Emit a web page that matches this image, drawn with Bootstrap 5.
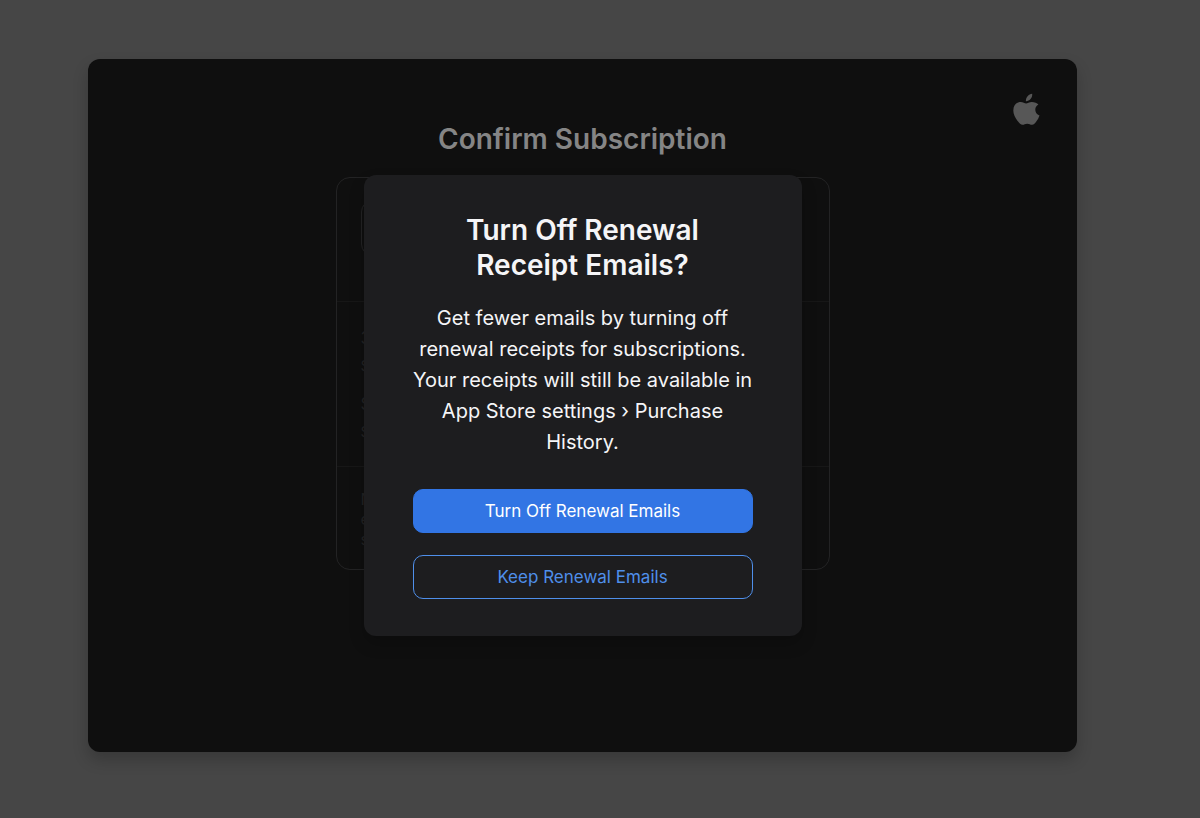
<!DOCTYPE html>
<html lang="en" data-bs-theme="dark">
<head>
<meta charset="utf-8">
<meta name="viewport" content="width=device-width, initial-scale=1">
<title>Confirm Subscription</title>
<link href="https://cdn.jsdelivr.net/npm/bootstrap@5.3.0/dist/css/bootstrap.min.css" rel="stylesheet">
<style>
body { background: #464646; font-family: Inter, "Liberation Sans", sans-serif; }
.stage { padding: 59px 123px 66px 88px; }
.window { background: #0f0f0f; border-radius: 12px; box-shadow: 0 8px 16px rgba(0,0,0,.2); }
.page-title { font-size: 28px; line-height: 36px; font-weight: 600; color: #858585; padding-top: 62px; margin-bottom: 20px; }
.logo { top: 34px; right: 37px; color: #575757; }
.summary { width: 494px; border: 1px solid #232324; border-radius: 14px; color: #222223; }
.summary-part { padding: 22px 24px 20px; }
.summary-part + .summary-part { border-top: 1px solid #171717; }
.product { height: 123px; }
.app-tile { width: 56px; height: 56px; border: 1px solid #232324; border-radius: 12px; }
.line-lg { font-size: 17px; line-height: 28px; }
.line-sm { font-size: 15px; line-height: 28px; }
.plan-gap { margin-bottom: 10px; }
.note { font-size: 16px; line-height: 20px; }
.dialog-box { width: 438px; background: #1d1d1f; border-radius: 12px; padding: 38px 49px 37px; box-shadow: 0 8px 16px rgba(0,0,0,.2); }
.dialog-title { font-size: 28px; line-height: 35px; font-weight: 600; color: #f5f5f7; margin-bottom: 20px; }
.dialog-copy { font-size: 20px; line-height: 31px; color: #f5f5f7; margin-bottom: 31px; }
.action { height: 44px; border-radius: 10px; font-size: 17px; line-height: 24px; }
.action-fill { --bs-btn-bg: #3275e4; --bs-btn-border-color: #3275e4; --bs-btn-color: #fff; }
.action-line { --bs-btn-border-color: #4f8fea; --bs-btn-color: #4f8fea; }
.actions { gap: 22px; }
</style>
</head>
<body>
<div class="stage d-flex min-vh-100">
  <main class="window position-relative flex-fill">
    <svg class="logo position-absolute" width="27" height="33" viewBox="0 0 27 33" fill="currentColor" role="img" aria-label="Apple">
      <path d="M19.200 0.700c.3 2.200-.5 4-1.700 5.400-1.200 1.400-2.900 2.300-4.600 2.200-.2-1.900.6-3.800 1.700-5.100C15.700 1.800 17.600.8 19.200.7z"/>
      <path d="M25.400 11.500c-2 1.300-3.100 2.900-3.100 5.200 0 2.600 1.500 4.700 4.200 5.700-.7 2.200-1.800 4.200-3.200 6.200-1.200 1.800-2.400 3.200-4.300 3.200-1.900 0-2.500-1.100-4.800-1.100-2.200 0-2.900 1.100-4.700 1.100-1.800 0-3.100-1.500-4.400-3.300C2.200 25.300.3 21 .3 17.500c0-5.600 3.600-8.400 7.400-8.400 2.300 0 4.100 1.400 5.400 1.400 1.200 0 3.200-1.600 5.700-1.600 2.800 0 5.200 1.200 6.600 2.600z"/>
    </svg>
    <h1 class="page-title text-center">Confirm Subscription</h1>
    <section class="summary mx-auto">
      <div class="summary-part product"><div class="app-tile"></div></div>
      <div class="summary-part">
        <div class="line-lg">3</div>
        <div class="line-sm plan-gap">S</div>
        <div class="line-lg">S</div>
        <div class="line-sm">S</div>
      </div>
      <div class="summary-part note">
        <div>N</div>
        <div>e</div>
        <div>s</div>
      </div>
    </section>
    <div class="position-absolute top-0 start-0 w-100 h-100 d-flex align-items-center justify-content-center">
      <div class="dialog-box text-center" role="dialog" aria-modal="true" aria-labelledby="dialog-title">
        <h2 class="dialog-title" id="dialog-title">Turn Off Renewal<br>Receipt Emails?</h2>
        <p class="dialog-copy">Get fewer emails by turning off<br>renewal receipts for subscriptions.<br>Your receipts will still be available in<br>App Store settings › Purchase<br>History.</p>
        <div class="actions d-grid">
          <button type="button" class="btn action action-fill">Turn Off Renewal Emails</button>
          <button type="button" class="btn action action-line">Keep Renewal Emails</button>
        </div>
      </div>
    </div>
  </main>
</div>
<script src="https://cdn.jsdelivr.net/npm/bootstrap@5.3.0/dist/js/bootstrap.bundle.min.js"></script>
</body>
</html>
